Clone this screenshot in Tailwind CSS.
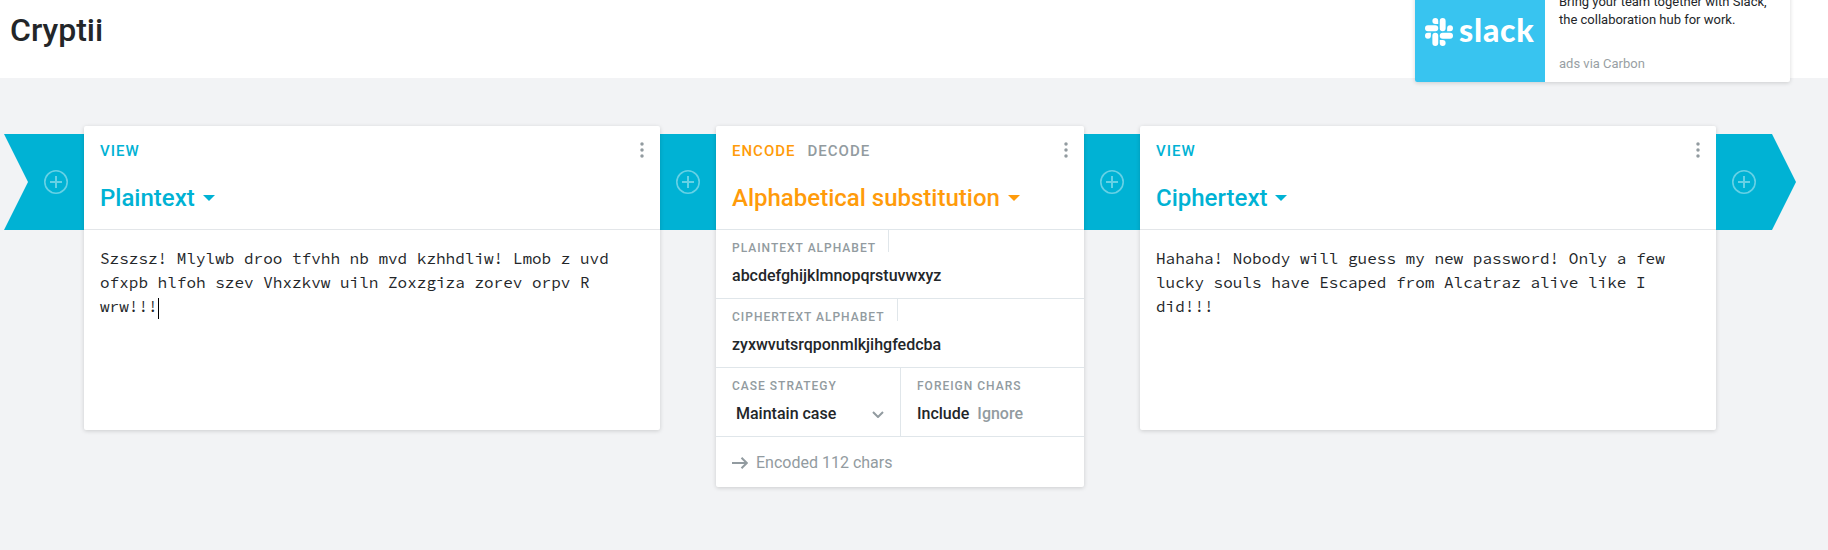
<!DOCTYPE html>
<html lang="en">
<head>
<meta charset="utf-8">
<title>Cryptii</title>
<script src="https://cdn.jsdelivr.net/npm/@tailwindcss/browser@4"></script>
</head>
<body class="h-[550px] w-[1828px] overflow-hidden bg-[#f2f3f5] font-['Roboto',sans-serif] text-[#232629]">
<svg class="hidden">
  <symbol id="plus" viewBox="0 0 24 24"><circle cx="12" cy="12" r="11.2" fill="none" stroke="currentColor" stroke-width="1.6"/><path d="M12 6v12M6 12h12" stroke="currentColor" stroke-width="2"/></symbol>
  <symbol id="dots" viewBox="0 0 4 16"><circle cx="2" cy="2" r="1.75" fill="currentColor"/><circle cx="2" cy="8" r="1.75" fill="currentColor"/><circle cx="2" cy="14" r="1.75" fill="currentColor"/></symbol>
  <symbol id="caret" viewBox="0 0 12 6"><path d="M0 0h12L6 6z" fill="currentColor"/></symbol>
</svg>
<header class="flex h-[78px] items-start justify-between bg-white pl-[10px] pr-[38px]">
  <h1 class="mt-[10px] text-[32px] leading-10 font-medium">Cryptii</h1>
  <aside class="-mt-[18px] flex h-[100px] w-[375px] shrink-0 overflow-hidden rounded-[2px] bg-white shadow-[0_1px_4px_rgba(0,0,0,0.16)]">
    <div class="flex w-[130px] items-center bg-[#38c4f0] pl-[10px] text-white">
      <svg class="h-7 w-7 shrink-0" viewBox="0 0 24 24" fill="currentColor"><path d="M5.042 15.165a2.528 2.528 0 0 1-2.52 2.523A2.528 2.528 0 0 1 0 15.165a2.527 2.527 0 0 1 2.522-2.52h2.52v2.52zM6.313 15.165a2.527 2.527 0 0 1 2.521-2.52 2.527 2.527 0 0 1 2.521 2.52v6.313A2.528 2.528 0 0 1 8.834 24a2.528 2.528 0 0 1-2.521-2.522v-6.313zM8.834 5.042a2.528 2.528 0 0 1-2.521-2.52A2.528 2.528 0 0 1 8.834 0a2.528 2.528 0 0 1 2.521 2.522v2.52H8.834zM8.834 6.313a2.528 2.528 0 0 1 2.521 2.521 2.528 2.528 0 0 1-2.521 2.521H2.522A2.528 2.528 0 0 1 0 8.834a2.528 2.528 0 0 1 2.522-2.521h6.312zM18.956 8.834a2.528 2.528 0 0 1 2.522-2.521A2.528 2.528 0 0 1 24 8.834a2.528 2.528 0 0 1-2.522 2.521h-2.522V8.834zM17.688 8.834a2.528 2.528 0 0 1-2.523 2.521 2.527 2.527 0 0 1-2.52-2.521V2.522A2.527 2.527 0 0 1 15.165 0a2.528 2.528 0 0 1 2.523 2.522v6.312zM15.165 18.956a2.528 2.528 0 0 1 2.523 2.522A2.528 2.528 0 0 1 15.165 24a2.527 2.527 0 0 1-2.52-2.522v-2.522h2.52zM15.165 17.688a2.527 2.527 0 0 1-2.52-2.523 2.526 2.526 0 0 1 2.52-2.52h6.313A2.527 2.527 0 0 1 24 15.165a2.528 2.528 0 0 1-2.522 2.523h-6.313z"/></svg>
      <span class="ml-[6px] -mt-[4px] font-['Lato'] text-[32px] leading-8 font-black tracking-[0.8px]">slack</span>
    </div>
    <div class="flex flex-1 flex-col pt-[11px] pl-[14px] text-[13px] leading-[18px]">
      <p class="whitespace-nowrap">Bring your team together with Slack,<br>the collaboration hub for work.</p>
      <p class="mt-[26px] text-[#999fa4]">ads via Carbon</p>
    </div>
  </aside>
</header>
<main class="flex items-start pt-12 pl-1">
  <div class="mt-2 flex h-24 w-20 items-center justify-end bg-[#00b2d4] pr-4 text-white/40 [clip-path:polygon(0_0,100%_0,100%_100%,0_100%,24px_50%)]"><svg class="h-6 w-6"><use href="#plus"/></svg></div>
  <section class="relative h-[304px] w-[576px] rounded-[2px] bg-white shadow-[0_1px_4px_rgba(0,0,0,0.16)]">
    <div class="h-[104px] border-b border-[#e3e6e9] px-4 pt-[13px] text-[#00b2d4]">
      <div class="flex justify-between text-[15px] leading-6 font-medium tracking-[1px]"><span>VIEW</span><svg class="mt-[3px] h-4 w-1 text-[#929ba0]"><use href="#dots"/></svg></div>
      <h2 class="mt-[19px] flex items-center text-2xl leading-8 font-medium">Plaintext<svg class="ml-2 h-1.5 w-3"><use href="#caret"/></svg></h2>
    </div>
    <p class="px-4 pt-4 font-['Source_Code_Pro','Noto_Sans_Mono_CJK_SC','Liberation_Mono',monospace] text-base leading-6 whitespace-nowrap">Szszsz! Mlylwb droo tfvhh nb mvd kzhhdliw! Lmob z uvd<br>ofxpb hlfoh szev Vhxzkvw uiln Zoxzgiza zorev orpv R<br>wrw!!!<span class="inline-block h-[21px] w-px bg-black align-middle"></span></p>
  </section>
  <div class="mt-2 flex h-24 w-14 items-center justify-center bg-[#00b2d4] text-white/40"><svg class="h-6 w-6"><use href="#plus"/></svg></div>
  <section class="relative h-[361px] w-[368px] rounded-[2px] bg-white shadow-[0_1px_4px_rgba(0,0,0,0.16)]">
    <div class="h-[104px] border-b border-[#e0e6ea] px-4 pt-[13px] text-[#ff9b0a]">
      <div class="flex text-[15px] leading-6 font-medium tracking-[1px]"><span>ENCODE</span><span class="ml-3 text-[#929ba0]">DECODE</span><svg class="mt-[3px] ml-auto h-4 w-1 text-[#929ba0]"><use href="#dots"/></svg></div>
      <h2 class="mt-[19px] flex items-center text-2xl leading-8 font-medium">Alphabetical substitution<svg class="ml-2 h-1.5 w-3"><use href="#caret"/></svg></h2>
    </div>
    <div class="h-[69px] border-b border-[#e0e6ea] pl-4">
      <div class="h-[22px] w-[157px] border-r border-[#e0e6ea] pt-[10px] text-xs leading-4 font-medium tracking-[1px] whitespace-nowrap text-[#929ba0]">PLAINTEXT ALPHABET</div>
      <div class="mt-3 font-medium">abcdefghijklmnopqrstuvwxyz</div>
    </div>
    <div class="h-[69px] border-b border-[#e0e6ea] pl-4">
      <div class="h-[22px] w-[166px] border-r border-[#e0e6ea] pt-[10px] text-xs leading-4 font-medium tracking-[1px] whitespace-nowrap text-[#929ba0]">CIPHERTEXT ALPHABET</div>
      <div class="mt-3 font-medium">zyxwvutsrqponmlkjihgfedcba</div>
    </div>
    <div class="flex h-[69px] border-b border-[#e0e6ea]">
      <div class="w-[185px] border-r border-[#e0e6ea] pt-[10px] pl-4">
        <div class="text-xs leading-4 font-medium tracking-[1px] text-[#929ba0]">CASE STRATEGY</div>
        <div class="mt-2 flex items-center justify-between pr-4 pl-1 font-medium">Maintain case<svg class="h-[7px] w-3 text-[#929ba0]" viewBox="0 0 12 7"><path d="M1 1l5 5 5-5" fill="none" stroke="currentColor" stroke-width="2"/></svg></div>
      </div>
      <div class="pt-[10px] pl-4">
        <div class="text-xs leading-4 font-medium tracking-[1px] text-[#929ba0]">FOREIGN CHARS</div>
        <div class="mt-2 flex gap-2 font-medium"><span>Include</span><span class="text-[#929ba0]">Ignore</span></div>
      </div>
    </div>
    <div class="flex h-[50px] items-center pt-[2px] pl-4 text-[#929ba0]"><svg class="mr-2 h-3 w-4" viewBox="0 0 16 12"><path d="M0 6h15M9.500 .8L14.800 6l-5.300 5.200" fill="none" stroke="currentColor" stroke-width="2"/></svg>Encoded 112 chars</div>
  </section>
  <div class="mt-2 flex h-24 w-14 items-center justify-center bg-[#00b2d4] text-white/40"><svg class="h-6 w-6"><use href="#plus"/></svg></div>
  <section class="relative h-[304px] w-[576px] rounded-[2px] bg-white shadow-[0_1px_4px_rgba(0,0,0,0.16)]">
    <div class="h-[104px] border-b border-[#e3e6e9] px-4 pt-[13px] text-[#00b2d4]">
      <div class="flex justify-between text-[15px] leading-6 font-medium tracking-[1px]"><span>VIEW</span><svg class="mt-[3px] h-4 w-1 text-[#929ba0]"><use href="#dots"/></svg></div>
      <h2 class="mt-[19px] flex items-center text-2xl leading-8 font-medium">Ciphertext<svg class="ml-2 h-1.5 w-3"><use href="#caret"/></svg></h2>
    </div>
    <p class="px-4 pt-4 font-['Source_Code_Pro','Noto_Sans_Mono_CJK_SC','Liberation_Mono',monospace] text-base leading-6 whitespace-nowrap">Hahaha! Nobody will guess my new password! Only a few<br>lucky souls have Escaped from Alcatraz alive like I<br>did!!!</p>
  </section>
  <div class="mt-2 flex h-24 w-20 items-center bg-[#00b2d4] pl-4 text-white/40 [clip-path:polygon(0_0,56px_0,100%_50%,56px_100%,0_100%)]"><svg class="h-6 w-6"><use href="#plus"/></svg></div>
</main>
</body>
</html>
